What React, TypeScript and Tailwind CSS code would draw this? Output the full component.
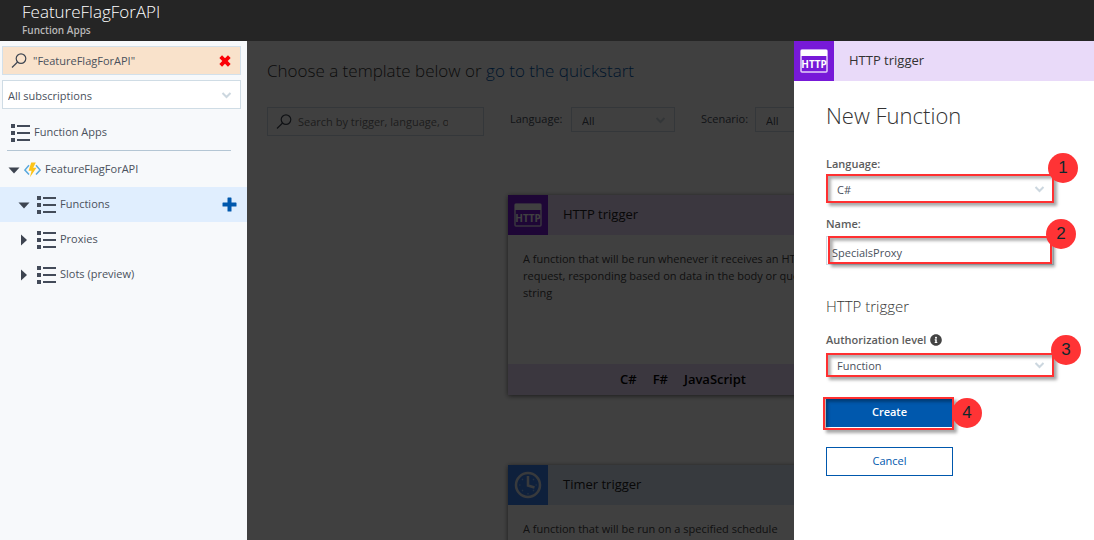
import type { ReactNode } from 'react';
import { FaInfoCircle } from 'react-icons/fa';

function SearchIcon() {
  return (
    <svg className="size-4 shrink-0" viewBox="0 0 16 16" fill="none" stroke="#3f4652" strokeWidth="1.2">
      <circle cx="10" cy="5.6" r="4.8" />
      <path d="M6.6 9 1 14.5" />
    </svg>
  );
}

function ListIcon() {
  return (
    <svg className="h-[18px] w-5 shrink-0" viewBox="0 0 20 18" fill="#434b59">
      <path d="M0 0h4v4H0zM0 7h4v4H0zM0 14h4v4H0zM6 1h13v2H6zM6 8h13v2H6zM6 15h13v2H6z" />
    </svg>
  );
}

function Caret({ open }: { open: boolean }) {
  return (
    <svg className="size-3 shrink-0" viewBox="0 0 12 12" fill="#3d4450">
      <path d={open ? 'M.5 3.5h11L6 9.5z' : 'M3 .5v11L9 6z'} />
    </svg>
  );
}

function BoltIcon() {
  return (
    <svg className="h-4 w-[17px] shrink-0" viewBox="0 0 17 16" fill="none">
      <path d="M5 3.2.9 8 5 12.4M12 3.2 16.1 8 12 12.4" stroke="#5aa9dd" strokeWidth="1.5" />
      <path d="M7.2.5h4.6L9.2 5.7h3.3L5.9 15.3l1.7-6.5H4.6z" fill="#fcc419" />
    </svg>
  );
}

function Chevron() {
  return (
    <svg
      className="pointer-events-none absolute top-1/2 right-[9px] h-2 w-[11px] -translate-y-1/2"
      viewBox="0 0 11 8"
      fill="none"
      stroke="#ccd7df"
      strokeWidth="2"
    >
      <path d="m1.5 2 4 4 4-4" />
    </svg>
  );
}

function HttpIcon() {
  return (
    <span className="flex size-10 shrink-0 items-center justify-center bg-[#7719d8]">
      <svg className="h-6 w-7" viewBox="0 0 28 24">
        <rect x="1" y="1" width="26" height="22" rx="1" fill="none" stroke="#e4d0f8" strokeWidth="1.5" />
        <path d="M1 1h26v6H1z" fill="#fff" />
        <text x="14" y="18.5" textAnchor="middle" fontSize="10" fontWeight="700" fill="#fff">
          HTTP
        </text>
      </svg>
    </span>
  );
}

function ClockIcon() {
  return (
    <span className="flex size-10 shrink-0 items-center justify-center bg-[#3b7ff0]">
      <svg className="size-7" viewBox="0 0 28 28" fill="none" stroke="#e0e6ee" strokeWidth="2.5">
        <circle cx="14" cy="14" r="12" />
        <path d="M14 5v9.5l6.5 2" />
        <path
          d="M14 22v1.5M5 14h1.5M21.5 14H23M8 8l1 1M20 8l-1 1M8 20l1-1M20 20l-1-1"
          strokeWidth="1.2"
          stroke="#8fc4ff"
        />
      </svg>
    </span>
  );
}

function Callout({ label, box, badge }: { label: string; box: string; badge: string }) {
  return (
    <>
      <span
        className={`pointer-events-none absolute border-2 border-[#ff3031] shadow-[3px_3px_3px_rgba(0,0,0,0.35),inset_3px_3px_3px_rgba(0,0,0,0.3)] ${box}`}
      />
      <span
        className={`pointer-events-none absolute flex size-[30px] items-center justify-center rounded-full bg-[#ff3335] font-['Liberation_Sans',sans-serif] text-[17px] text-[#10282c] ${badge}`}
      >
        {label}
      </span>
    </>
  );
}

function Select({ id, value, label, className }: { id: string; value: string; label?: string; className: string }) {
  return (
    <span className="relative block">
      <select
        id={id}
        aria-label={label}
        defaultValue={value}
        className={`block w-full appearance-none border border-[#cfdce5] bg-white pt-[3px] text-[11px] text-[#4a515c] outline-none ${className}`}
      >
        <option>{value}</option>
      </select>
      <Chevron />
    </span>
  );
}

function TreeItem({ label, open, selected }: { label: string; open: boolean; selected?: boolean }) {
  return (
    <li className={`flex h-[35px] items-center pr-[10px] pl-[18px] ${selected ? 'bg-[#e0eefe]' : ''}`}>
      <Caret open={open} />
      <span className="ml-[7px] flex items-center gap-[3px]">
        <ListIcon />
        {label}
      </span>
      {selected && (
        <button type="button" aria-label="New function" className="ml-auto">
          <svg className="size-[15px]" viewBox="0 0 15 15" fill="#0058ad">
            <rect x="5.5" y="0.5" width="4" height="14" rx="0.6" />
            <rect x="0.5" y="5.5" width="14" height="4" rx="0.6" />
          </svg>
        </button>
      )}
    </li>
  );
}

function TemplateCard({
  title,
  icon,
  tint,
  languages,
  children,
}: {
  title: string;
  icon: ReactNode;
  tint: string;
  languages: string[];
  children: ReactNode;
}) {
  return (
    <article className="flex h-[200px] w-[350px] shrink-0 flex-col bg-white shadow-[0_1px_5px_rgba(0,0,0,0.6)]">
      <header className={`flex items-center gap-[15px] text-[13px] text-[#222] ${tint}`}>
        {icon}
        <h2>{title}</h2>
      </header>
      <p className="flex-1 pt-[15px] pr-10 pl-[15px] leading-[17px] text-[#444]">{children}</p>
      <footer className={`flex h-[31px] items-center justify-center gap-4 text-[13px] font-semibold text-black ${tint}`}>
        {languages.map((language) => (
          <span key={language}>{language}</span>
        ))}
      </footer>
    </article>
  );
}

export default function App() {
  return (
    <div className="flex h-screen flex-col overflow-hidden bg-white font-['Open_Sans','Noto_Sans',sans-serif] text-[11px] text-[#4a515c]">
      <header className="flex h-[41px] shrink-0 flex-col bg-[#252525] pl-[22px]">
        <h1 className="text-[17px] leading-6 font-light text-white">FeatureFlagForAPI</h1>
        <p className="text-[10px] leading-3 font-semibold text-[#b8b8b8]">Function Apps</p>
      </header>

      <div className="flex min-h-0 flex-1">
        <aside className="w-[247px] shrink-0 bg-[#f7f9fb] pt-[5px]">
          <div className="mr-[6px] ml-[2px] flex flex-col gap-[5px]">
            <div className="flex h-[29px] items-center gap-[6px] border border-[#d3e0ea] bg-[#f9e2cb] pr-[9px] pl-2">
              <SearchIcon />
              <input
                aria-label="Search function apps"
                defaultValue={'"FeatureFlagForAPI"'}
                className="min-w-0 flex-1 bg-transparent pt-[2px] outline-none"
              />
              <button type="button" aria-label="Clear search">
                <svg className="size-3" viewBox="0 0 12 12" stroke="#fb0007" strokeWidth="3.8">
                  <path d="m1.7 1.7 8.6 8.6M10.3 1.7l-8.6 8.6" />
                </svg>
              </button>
            </div>
            <Select id="subscriptions" label="Subscriptions" value="All subscriptions" className="h-[29px] pl-[5px]" />
          </div>
          <div className="mt-[6px] flex h-[35px] items-center gap-[3px] pl-[11px]">
            <ListIcon />
            Function Apps
          </div>
          <hr className="mr-4 mb-px ml-[7px] border-[#b4c6d4]" />
          <ul>
            <li className="flex h-[35px] items-center gap-1 pl-2">
              <Caret open />
              <BoltIcon />
              FeatureFlagForAPI
            </li>
            <TreeItem label="Functions" open selected />
            <TreeItem label="Proxies" open={false} />
            <TreeItem label="Slots (preview)" open={false} />
          </ul>
        </aside>

        <main className="relative min-w-0 flex-1 overflow-hidden bg-white pl-5">
          <h2 className="pt-[18px] text-[17px] leading-6 font-light whitespace-nowrap text-[#333]">
            Choose a template below or{' '}
            <a href="#quickstart" className="text-[#0058ad]">
              go to the quickstart
            </a>
          </h2>
          <div className="mt-6 flex items-start whitespace-nowrap">
            <div className="flex h-[29px] w-[217px] shrink-0 items-center gap-[6px] border border-[#cfdce5] pr-[35px] pl-2">
              <SearchIcon />
              <input
                aria-label="Search templates"
                placeholder="Search by trigger, language, or description"
                className="min-w-0 flex-1 bg-transparent pt-[2px] outline-none placeholder:text-[#767676]"
              />
            </div>
            <label htmlFor="filter-language" className="ml-[26px] w-[61px] shrink-0 leading-6">
              Language:
            </label>
            <div className="w-[104px] shrink-0">
              <Select id="filter-language" value="All" className="h-[25px] pl-[10px]" />
            </div>
            <label htmlFor="filter-scenario" className="ml-[26px] w-[54px] shrink-0 leading-6">
              Scenario:
            </label>
            <div className="w-[104px] shrink-0">
              <Select id="filter-scenario" value="All" className="h-[25px] pl-[10px]" />
            </div>
          </div>
          <div className="mt-[59px] ml-[241px] flex flex-col gap-[70px]">
            <TemplateCard
              title="HTTP trigger"
              icon={<HttpIcon />}
              tint="bg-[#e9daf9]"
              languages={['C#', 'F#', 'JavaScript']}
            >
              A function that will be run whenever it receives an HTTP request, responding based on data in the body or
              query string
            </TemplateCard>
            <TemplateCard
              title="Timer trigger"
              icon={<ClockIcon />}
              tint="bg-[#dbe7f8]"
              languages={['C#', 'F#', 'JavaScript']}
            >
              A function that will be run on a specified schedule
            </TemplateCard>
          </div>
          <div className="absolute inset-0 bg-black/75" />
        </main>

        <section className="w-[300px] shrink-0 bg-white">
          <header className="flex items-center gap-[15px] bg-[#e9daf9] text-[13px] text-[#333]">
            <HttpIcon />
            <h2>HTTP trigger</h2>
          </header>
          <form className="px-8 pt-[19px]" onSubmit={(event) => event.preventDefault()}>
            <h3 className="text-[22px] leading-[30px] font-light text-[#333]">New Function</h3>

            <label htmlFor="language" className="mt-6 block leading-5 font-semibold text-[#5c5c5c]">
              Language:
            </label>
            <div className="relative w-[228px]">
              <Select id="language" value="C#" className="h-[29px] pl-[10px]" />
              <Callout label="1" box="inset-0" badge="-top-[21px] -right-[24px]" />
            </div>

            <label htmlFor="name" className="mt-[11px] block leading-5 font-semibold text-[#5c5c5c]">
              Name:
            </label>
            <div className="relative mt-[2px] w-[228px]">
              <input
                id="name"
                defaultValue="SpecialsProxy"
                className="block h-[29px] w-full border border-[#cfdce5] pt-1 pl-[5px] outline-none"
              />
              <Callout label="2" box="top-0 right-[2px] bottom-px left-[2px]" badge="-top-[17px] -right-[22px]" />
            </div>

            <h4 className="mt-[29px] text-[15px] leading-6 font-light text-[#333]">HTTP trigger</h4>

            <label
              htmlFor="authorization"
              className="mt-3 flex items-center gap-1 leading-5 font-semibold text-[#5c5c5c]"
            >
              Authorization level
              <FaInfoCircle className="size-3 text-[#444]" />
            </label>
            <div className="relative mt-[3px] w-[228px]">
              <Select id="authorization" value="Function" className="h-6 pl-[10px]" />
              <Callout label="3" box="inset-0" badge="-top-[18px] -right-[27px]" />
            </div>

            <div className="relative mt-[21px] w-[127px]">
              <button type="submit" className="h-[29px] w-full bg-[#0058ad] font-semibold text-white">
                Create
              </button>
              <Callout
                label="4"
                box="-top-px -right-px -bottom-[3px] -left-[3px]"
                badge="top-0 -right-[29px]"
              />
            </div>
            <button type="button" className="mt-5 h-[29px] w-[127px] border border-[#0058ad] bg-white text-[#0058ad]">
              Cancel
            </button>
          </form>
        </section>
      </div>
    </div>
  );
}
